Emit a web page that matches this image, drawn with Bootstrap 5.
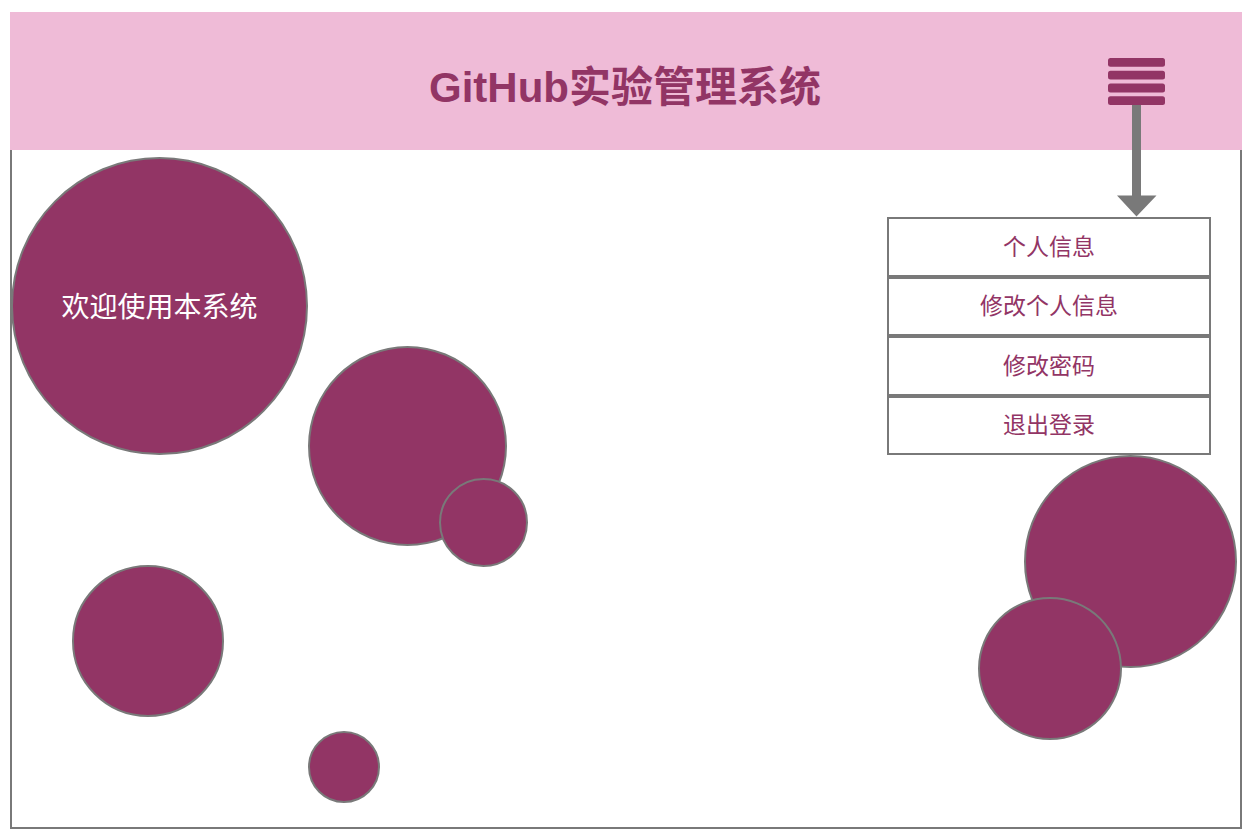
<!DOCTYPE html>
<html lang="zh-CN">
<head>
<meta charset="utf-8">
<meta name="viewport" content="width=device-width, initial-scale=1">
<title>GitHub实验管理系统</title>
<link href="https://cdn.jsdelivr.net/npm/bootstrap@5.3.0/dist/css/bootstrap.min.css" rel="stylesheet">
<style>
  :root { --plum: #923565; --pink: #efbbd7; --line: #797979; }
  body { font-family: "Liberation Sans", "Noto Sans CJK SC", sans-serif; color: var(--plum); background: #fff; }
  .page { padding: 12px 0 1px 10px; }
  .topbar { display: grid; grid-template-columns: 1fr auto 1fr; min-height: 138px; background: var(--pink); }
  .site-title { grid-column: 2; font-size: 42px; line-height: 60px; padding: 14px 2px 0 0; }
  .menu-anchor { margin-right: 77px; }
  .menu-toggle svg { width: 57px; height: 47px; fill: var(--plum); }
  .pointer { top: 100%; left: 9px; width: 40px; height: 112px; fill: var(--line); z-index: 2; }
  .stage { border: 2px solid var(--line); border-top: 0; padding: 67px 29px 0 0; }
  .side-menu { width: 324px; height: 238px; font-size: 23px; line-height: 32px; z-index: 1; }
  .side-menu a { border: 2px solid var(--line); color: var(--plum); background: #fff; }
  .side-menu a:hover { background: var(--pink); }
  .bubble { border: 2px solid var(--line); background: var(--plum); }
  .bubble-welcome { left: -1px; top: 7px; width: 297px; height: 298px; padding-top: 3px; color: #fff; font-size: 28px; line-height: 40px; }
  .bubble-large { left: 296px; top: 196px; width: 199px; height: 200px; }
  .bubble-overlap { left: 427px; top: 328px; width: 89px; height: 89px; }
  .bubble-medium { left: 60px; top: 415px; width: 152px; height: 152px; }
  .bubble-small { left: 296px; top: 581px; width: 72px; height: 72px; }
  .bubble-right { right: 3px; top: 305px; width: 213px; height: 213px; }
  .bubble-right-low { right: 118px; top: 447px; width: 144px; height: 143px; }
</style>
</head>
<body>
<div class="page min-vh-100 d-flex flex-column">
  <header class="topbar align-items-center">
    <h1 class="site-title fw-bold m-0 text-nowrap">GitHub实验管理系统</h1>
    <div class="menu-anchor position-relative ms-auto">
      <button type="button" class="menu-toggle btn p-0 border-0 rounded-0 d-block" aria-label="菜单" aria-controls="sideMenu">
        <svg class="d-block" viewBox="0 0 57 47" aria-hidden="true">
          <rect width="57" height="8.7" rx="2.5"/>
          <rect y="12.8" width="57" height="8.8" rx="2.5"/>
          <rect y="25.6" width="57" height="8.8" rx="2.5"/>
          <rect y="38.3" width="57" height="8.7" rx="2.5"/>
        </svg>
      </button>
      <svg class="pointer position-absolute" viewBox="0 0 40 112" aria-hidden="true">
        <path d="M15 0H24V90.500H39.500L19.500 111.500L0 90.500H15Z"/>
      </svg>
    </div>
  </header>
  <main class="stage position-relative flex-grow-1">
    <div class="bubble bubble-welcome rounded-circle position-absolute d-flex align-items-center justify-content-center">欢迎使用本系统</div>
    <div class="bubble bubble-large rounded-circle position-absolute"></div>
    <div class="bubble bubble-overlap rounded-circle position-absolute"></div>
    <div class="bubble bubble-medium rounded-circle position-absolute"></div>
    <div class="bubble bubble-small rounded-circle position-absolute"></div>
    <div class="bubble bubble-right rounded-circle position-absolute"></div>
    <div class="bubble bubble-right-low rounded-circle position-absolute"></div>
    <nav id="sideMenu" class="side-menu position-relative ms-auto d-flex flex-column" aria-label="用户菜单">
      <a class="d-flex flex-fill align-items-center justify-content-center text-decoration-none" href="#profile">个人信息</a>
      <a class="d-flex flex-fill align-items-center justify-content-center text-decoration-none" href="#edit">修改个人信息</a>
      <a class="d-flex flex-fill align-items-center justify-content-center text-decoration-none" href="#password">修改密码</a>
      <a class="d-flex flex-fill align-items-center justify-content-center text-decoration-none" href="#logout">退出登录</a>
    </nav>
  </main>
</div>
<script src="https://cdn.jsdelivr.net/npm/bootstrap@5.3.0/dist/js/bootstrap.bundle.min.js"></script>
</body>
</html>
